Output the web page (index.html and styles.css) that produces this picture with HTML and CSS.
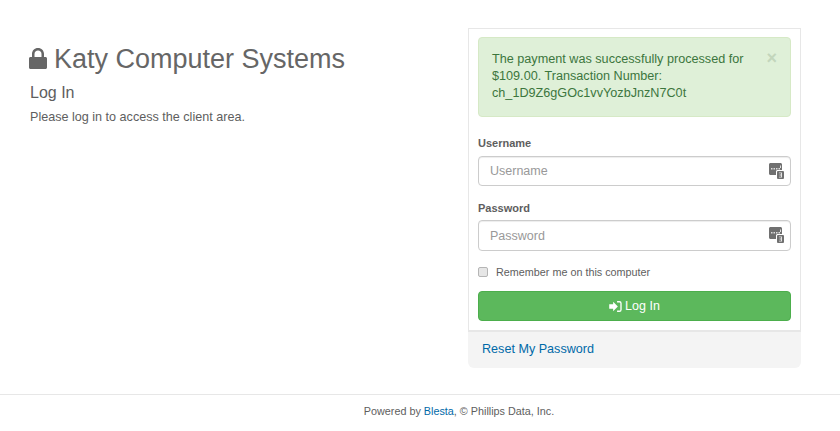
FILE: index.html
```html
<!DOCTYPE html>
<html lang="en">
<head>
  <meta charset="UTF-8">
  <title>Log In</title>
  <link rel="stylesheet" href="styles.css">
</head>
<body>

<div class="container">
  <div class="intro">
    <h1>
      <svg class="lock" viewBox="0 0 18 21"><path fill-rule="evenodd" d="M3 9V6C3 2.600 5.500 0 9 0s6 2.600 6 6v3h1.500c.8 0 1.500.7 1.500 1.500v9c0 .8-.7 1.500-1.500 1.500h-15C.7 21 0 20.300 0 19.500v-9C0 9.700.7 9 1.500 9H3zm2.500 0h7V6C12.500 4 11 2.500 9 2.500S5.500 4 5.500 6v3z"/></svg>
      Katy Computer Systems
    </h1>
    <h2>Log In</h2>
    <p>Please log in to access the client area.</p>
  </div>

  <div class="login-box">
    <div class="login-card">
      <div class="alert">
        <span class="close">&times;</span>
        <p>The payment was successfully processed for $109.00. Transaction Number: ch_1D9Z6gGOc1vvYozbJnzN7C0t</p>
      </div>

      <div class="field">
        <label for="username">Username</label>
        <div class="input-wrap">
          <input id="username" type="text" placeholder="Username">
          <svg class="key-icon" viewBox="0 0 15 16"><path fill="#707070" d="M1.500 0h10c.8 0 1.500.7 1.500 1.500V7H8.500C7.700 7 7 7.700 7 8.500V12H1.500C.7 12 0 11.300 0 10.500v-9C0 .7.700 0 1.500 0z"/><rect x="8" y="8" width="7" height="8" rx="1" fill="#707070"/><path fill="#ddd" d="M2 5h1.500v1.500H2zM4.500 5H6v1.500H4.500zM7 5h1.500v1.500H7zM9.500 5H11v1.500H9.500zM11 2.500h1V5h-1z"/><path fill="#e4e4e4" d="M10 9.500H13V14.500H10V13.700H12V12.400H10.500V11.600H12V10.300H10z"/></svg>
        </div>
      </div>

      <div class="field">
        <label for="password">Password</label>
        <div class="input-wrap">
          <input id="password" type="password" placeholder="Password">
          <svg class="key-icon" viewBox="0 0 15 16"><path fill="#707070" d="M1.500 0h10c.8 0 1.500.7 1.500 1.500V7H8.500C7.700 7 7 7.700 7 8.500V12H1.500C.7 12 0 11.300 0 10.500v-9C0 .7.700 0 1.500 0z"/><rect x="8" y="8" width="7" height="8" rx="1" fill="#707070"/><path fill="#ddd" d="M2 5h1.500v1.500H2zM4.500 5H6v1.500H4.500zM7 5h1.500v1.500H7zM9.500 5H11v1.500H9.500zM11 2.500h1V5h-1z"/><path fill="#e4e4e4" d="M10 9.500H13V14.500H10V13.700H12V12.400H10.500V11.600H12V10.300H10z"/></svg>
        </div>
      </div>

      <label class="remember"><input type="checkbox"> Remember me on this computer</label>

      <button class="login-button">
        <svg class="signin" viewBox="0 0 16 14"><path fill="#fff" d="M0 4h5V.8L11 7l-6 6.200V10H0z"/><path fill="none" stroke="#fff" stroke-width="1.700" d="M10 1h3c1.200 0 2 .8 2 2v8c0 1.200-.8 2-2 2h-3"/></svg>
        Log In
      </button>
    </div>
    <div class="login-links">
      <a href="#">Reset My Password</a>
    </div>
  </div>
</div>

<footer>
  Powered by <a href="#">Blesta</a>, &copy; Phillips Data, Inc.
</footer>

</body>
</html>
```

FILE: styles.css
```css
* {
  box-sizing: border-box;
}
body {
  margin: 0;
  font-family: "Liberation Sans", Arial, sans-serif;
  font-size: 12px;
  color: #5e5e5e;
  background-color: #fff;
}
a {
  color: #0069a8;
  text-decoration: none;
}
.container {
  display: flex;
  justify-content: space-between;
  align-items: flex-start;
  padding: 28px 39px 0 30px;
  height: 394px;
}
.intro {
  padding-top: 15px;
}
.intro h1 {
  display: flex;
  align-items: center;
  gap: 7px;
  margin: 0;
  font-size: 27px;
  font-weight: normal;
  line-height: 32px;
  color: #666;
}
.lock {
  width: 18px;
  height: 21px;
  margin: -2px 0 0 -1px;
  fill: #666;
}
.intro h2 {
  margin: 8px 0 0;
  font-size: 16px;
  font-weight: normal;
  line-height: 20px;
}
.intro p {
  margin: 6px 0 0;
  font-size: 12.600px;
  line-height: 17px;
}
.login-box {
  width: 333px;
}
.login-card {
  display: flex;
  flex-direction: column;
  padding: 8px 9px 9px;
  border: 1px solid #e7e7e7;
  border-bottom-width: 2px;
}
.alert {
  display: flex;
  flex-direction: row-reverse;
  justify-content: space-between;
  padding: 13px 13px 14px 13px;
  margin-bottom: 19px;
  background-color: #dff0d8;
  border: 1px solid #d6e9c6;
  border-radius: 4px;
  color: #3c763d;
  font-size: 12.650px;
  line-height: 17px;
}
.alert p {
  margin: 0;
  width: 270px;
}
.close {
  font-size: 18px;
  font-weight: bold;
  line-height: 14px;
  color: #c3d6bc;
}
.field {
  margin-bottom: 15px;
}
.field label {
  display: block;
  margin-bottom: 6px;
  font-size: 11px;
  font-weight: bold;
  line-height: 14px;
}
.field + .field {
  margin-bottom: 14px;
}
.field + .field label {
  margin-bottom: 5px;
}
.field + .field input {
  height: 31px;
}
.input-wrap {
  position: relative;
}
.input-wrap input {
  display: block;
  width: 100%;
  height: 30px;
  padding: 0 11px;
  border: 1px solid #ccc;
  border-radius: 4px;
  font-family: inherit;
  font-size: 12.500px;
  color: #555;
  box-shadow: inset 0 1px 1px rgba(0, 0, 0, 0.075);
}
.input-wrap input::placeholder {
  color: #999;
}
.key-icon {
  position: absolute;
  top: 7px;
  right: 7px;
  width: 15px;
  height: 16px;
}
.remember {
  display: flex;
  align-items: center;
  gap: 8px;
  font-size: 10.800px;
  line-height: 14px;
  margin-bottom: 12px;
}
.remember input {
  appearance: none;
  margin: 0;
  width: 10px;
  height: 10px;
  background-color: #e6e6e6;
  border: 1px solid #b5b5b5;
  border-radius: 2px;
}
.login-button {
  display: flex;
  align-items: center;
  justify-content: center;
  gap: 3px;
  height: 30px;
  border: 1px solid #4cae4c;
  border-radius: 4px;
  background-color: #5cb85c;
  color: #fff;
  font-family: inherit;
  font-size: 12.500px;
}
.signin {
  width: 13px;
  height: 11px;
}
.login-links {
  height: 36px;
  padding: 0 14px;
  background-color: #f4f4f4;
  border-radius: 0 0 6px 6px;
  font-size: 12.600px;
  line-height: 35px;
}
footer {
  border-top: 1px solid #e7e7e7;
  padding: 9px 0 0 78px;
  text-align: center;
  font-size: 10.800px;
  line-height: 14px;
}
```
